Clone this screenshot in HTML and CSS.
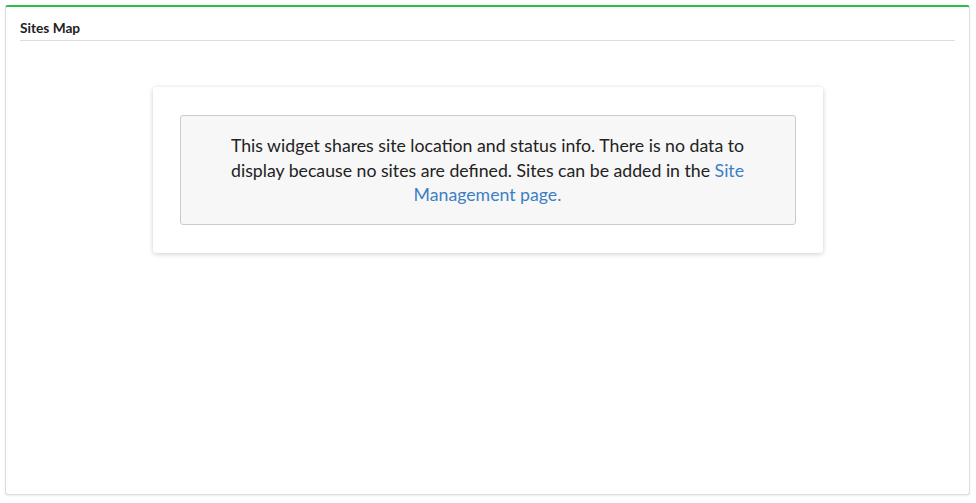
FILE: index.html
```html
<!DOCTYPE html>
<html>
<head>
<meta charset="utf-8">
<link rel="stylesheet" href="styles.css">
</head>
<body>
<div class="panel">
  <div class="panel-header">Sites Map</div>
  <div class="panel-body">
    <div class="card">
      <div class="well">This widget shares site location and status info. There is no data to display because no sites are defined. Sites can be added in the <a href="#">Site Management page.</a></div>
    </div>
  </div>
</div>
</body>
</html>
```
FILE: styles.css
```css
html, body { margin: 0; padding: 0; background: #fff; }
body { font-family: Lato, "Open Sans", sans-serif; color: #333; }
.panel {
  margin: 5px 6px 8px 5px;
  height: 490px;
  box-sizing: border-box;
  border: 1px solid #ddd;
  border-top: 2px solid #2dbd48;
  border-radius: 3px;
  box-shadow: 0 1px 2px rgba(0,0,0,0.08);
  padding: 0 14px;
}
.panel-header {
  font-size: 13.7px;
  font-weight: bold;
  color: #222;
  padding-top: 13px;
  height: 20px;
  line-height: 16px;
  border-bottom: 1px solid #ddd;
}
.panel-body {
  display: flex;
  justify-content: center;
  padding-top: 46px;
}
.card {
  width: 670px;
  box-sizing: border-box;
  padding: 28px 27px;
  background: #fff;
  border-radius: 3px;
  box-shadow: 0 1px 5px rgba(0,0,0,0.2);
}
.well {
  background: #f7f7f7;
  border: 1px solid #ccc;
  border-radius: 3px;
  padding: 18px 30px 16px;
  text-align: center;
  font-size: 17.7px;
  line-height: 24.5px;
  color: #222;
}
.well a { color: #3d7fc6; text-decoration: none; }
```
